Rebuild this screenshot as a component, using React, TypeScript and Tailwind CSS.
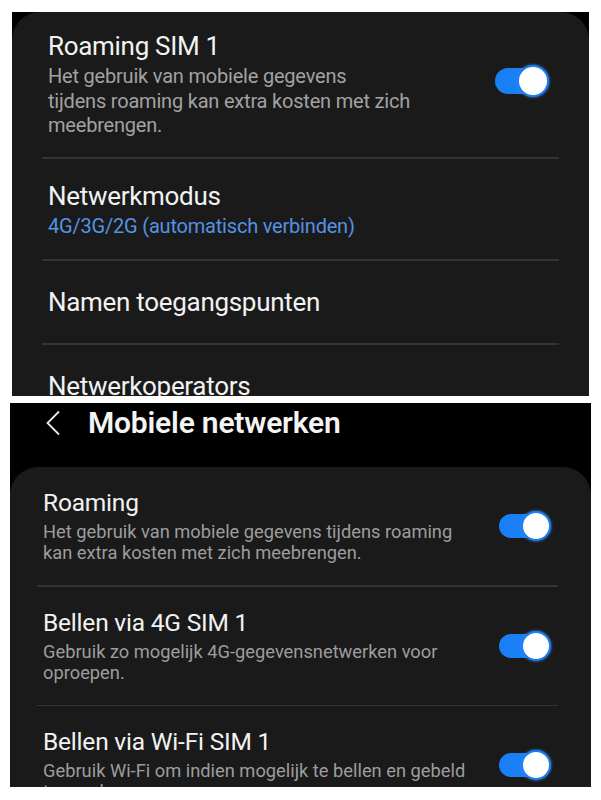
import React from "react";

type Row = {
  title: string;
  lines?: string[];
  accent?: boolean;
  toggle?: boolean;
};

const topRows: Row[] = [
  {
    title: "Roaming SIM 1",
    lines: [
      "Het gebruik van mobiele gegevens",
      "tijdens roaming kan extra kosten met zich",
      "meebrengen.",
    ],
    toggle: true,
  },
  { title: "Netwerkmodus", lines: ["4G/3G/2G (automatisch verbinden)"], accent: true },
  { title: "Namen toegangspunten" },
  { title: "Netwerkoperators" },
];

const bottomRows: Row[] = [
  {
    title: "Roaming",
    lines: [
      "Het gebruik van mobiele gegevens tijdens roaming",
      "kan extra kosten met zich meebrengen.",
    ],
    toggle: true,
  },
  {
    title: "Bellen via 4G SIM 1",
    lines: ["Gebruik zo mogelijk 4G-gegevensnetwerken voor", "oproepen."],
    toggle: true,
  },
  {
    title: "Bellen via Wi-Fi SIM 1",
    lines: ["Gebruik Wi-Fi om indien mogelijk te bellen en gebeld", "te worden."],
    toggle: true,
  },
];

function Toggle({ small }: { small?: boolean }) {
  return (
    <div
      className={
        small
          ? "relative h-[30px] w-[52px] shrink-0"
          : "relative mb-[6px] h-[32px] w-[54px] shrink-0"
      }
    >
      <div className="absolute inset-y-[3px] left-0 right-[6px] rounded-full bg-[#1a7ef4]" />
      <div
        className={
          small
            ? "absolute right-0 top-0 h-[30px] w-[30px] rounded-full border-[2px] border-[#1a7ef4] bg-white shadow-[0_0_3px_#3d8fff]"
            : "absolute right-0 top-0 h-[32px] w-[32px] rounded-full border-[2px] border-[#1a7ef4] bg-white shadow-[0_0_3px_#3d8fff]"
        }
      />
    </div>
  );
}

function TopItem({ row, first }: { row: Row; first: boolean }) {
  // the first row sits a little tighter than the rest in the screenshot
  const pad = first ? "pt-[19px] pb-[19px]" : "pt-[22px] pb-[21px]";
  return (
    <div>
      {!first && <div className="mx-[30px] h-[2px] bg-[#343434]" />}
      <div
        className={
          row.lines
            ? `flex items-center justify-between ${pad} pl-[36px] pr-[40px]`
            : "flex h-[82px] items-center pl-[36px] pr-[40px]"
        }
      >
        <div>
          <div className="text-[26px] leading-[30px] tracking-[-0.3px] text-[#f2f2f2]">{row.title}</div>
          {row.lines && (
            <div
              className={
                row.accent
                  ? "mt-[3px] text-[20px] leading-[24.5px] tracking-[-0.2px] text-[#5592e4]"
                  : "mt-[3px] text-[20px] leading-[24.5px] tracking-[-0.2px] text-[#a2a2a2]"
              }
            >
              {row.lines.map((l) => (
                <div key={l} className="whitespace-nowrap">
                  {l}
                </div>
              ))}
            </div>
          )}
        </div>
        {row.toggle && <Toggle />}
      </div>
    </div>
  );
}

function BottomItem({ row, first }: { row: Row; first: boolean }) {
  return (
    <div>
      {!first && <div className="ml-[27px] mr-[33px] h-[1.5px] bg-[#343434]" />}
      <div className="flex items-center justify-between py-[22px] pl-[33px] pr-[40px]">
        <div>
          <div className="text-[24.5px] leading-[28px] tracking-[-0.2px] text-[#f2f2f2]">{row.title}</div>
          {row.lines && (
            <div className="mt-[4px] text-[18.3px] leading-[21px] text-[#9d9d9d]">
              {row.lines.map((l) => (
                <div key={l} className="whitespace-nowrap">
                  {l}
                </div>
              ))}
            </div>
          )}
        </div>
        {row.toggle && <Toggle small />}
      </div>
    </div>
  );
}

export default function App() {
  return (
    <div className="h-[800px] w-[601px] overflow-hidden bg-white font-['Roboto',sans-serif]">
      {/* first screenshot */}
      <div className="ml-[12px] mt-[12px] h-[384px] w-[577px] overflow-hidden bg-black">
        <div className="h-full rounded-t-[28px] bg-[#1a1a1a]">
          {topRows.map((r, i) => (
            <TopItem key={r.title} row={r} first={i === 0} />
          ))}
        </div>
      </div>

      {/* second screenshot */}
      <div className="ml-[10px] mt-[7px] flex h-[384px] w-[581px] flex-col overflow-hidden bg-black">
        <div className="flex h-[64px] shrink-0 items-start pt-[2px]">
          <svg width="18" height="26" viewBox="0 0 18 26" className="ml-[34px] mt-[5px]" fill="none">
            <path d="M15 1.5 L3.5 13 L15 24.5" stroke="#e8e8e8" strokeWidth="1.8" />
          </svg>
          <div className="ml-[26px] text-[30px] font-semibold leading-[36px] tracking-[-0.2px] text-[#f4f4f4]">
            Mobiele netwerken
          </div>
        </div>
        <div className="flex-1 rounded-t-[28px] bg-[#1a1a1a]">
          {bottomRows.map((r, i) => (
            <BottomItem key={r.title} row={r} first={i === 0} />
          ))}
        </div>
      </div>
    </div>
  );
}
